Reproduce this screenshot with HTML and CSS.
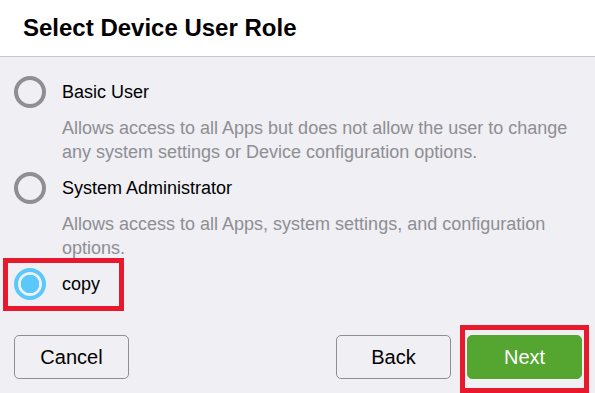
FILE: index.html
```html
<!DOCTYPE html>
<html lang="en">
  <head>
    <meta charset="UTF-8" />
    <meta name="viewport" content="width=device-width, initial-scale=1.0" />
    <title>Select Device User Role</title>
    <link rel="stylesheet" href="styles.css">
  </head>
  <body>
    <div class="header">
      <h1>Select Device User Role</h1>
    </div>
    <div class="roles">
      <div class="role">
        <div class="row">
          <span class="radio"></span>
          <span class="label">Basic User</span>
        </div>
        <p class="desc">Allows access to all Apps but does not allow the user to change any system settings or Device configuration options.</p>
      </div>
      <div class="role">
        <div class="row">
          <span class="radio"></span>
          <span class="label">System Administrator</span>
        </div>
        <p class="desc">Allows access to all Apps, system settings, and configuration options.</p>
      </div>
      <div class="role">
        <div class="row highlighted">
          <span class="radio checked"></span>
          <span class="label">copy</span>
        </div>
      </div>
    </div>
    <div class="actions">
      <button class="btn">Cancel</button>
      <div class="right">
        <button class="btn">Back</button>
        <button class="btn primary highlighted">Next</button>
      </div>
    </div>
  </body>
</html>
```

FILE: styles.css
```css
:root {
  --bg: #efeff4;
  --gray: #8e8e93;
  --blue: #5ac8fa;
  --green: #55a630;
  --mark: #e8192c;
}

*,
*::after {
  box-sizing: border-box;
  margin: 0;
  padding: 0;
  font-family: "Liberation Sans", Arial, sans-serif;
}

body {
  background: var(--bg);
  width: 595px;
  height: 393px;
  overflow: hidden;
}

.header {
  height: 57px;
  background: #fff;
  border-bottom: 1px solid #c8c7cc;
  padding-left: 23px;
  display: flex;
  align-items: center;
}

h1 {
  font-size: 24px;
  font-weight: 700;
  color: #000;
}

.roles {
  padding: 19px 14px 0;
  display: flex;
  flex-direction: column;
  gap: 8px;
}

.row {
  display: flex;
  align-items: center;
  gap: 16px;
  height: 32px;
  position: relative;
}

.radio {
  width: 32px;
  height: 32px;
  border-radius: 50%;
  border: 4px solid var(--gray);
  flex: none;
}

.radio.checked {
  border-color: var(--blue);
  background: radial-gradient(circle, var(--blue) 0 9px, transparent 9.5px);
}

.label {
  font-size: 18px;
  color: #000;
}

.desc {
  margin: 8px 0 0 48px;
  font-size: 18px;
  line-height: 24px;
  color: var(--gray);
}

.row.highlighted::after {
  content: "";
  position: absolute;
  left: -11px;
  top: -10px;
  width: 121px;
  height: 53px;
  border: 5px solid var(--mark);
}

.actions {
  display: flex;
  justify-content: space-between;
  padding: 35px 13px 0 14px;
}

.right {
  display: flex;
  gap: 16px;
}

.btn {
  position: relative;
  width: 115px;
  height: 44px;
  border: 1px solid var(--gray);
  border-radius: 5px;
  background: var(--bg);
  font-size: 20px;
  color: #000;
}

.btn.primary {
  background: var(--green);
  border-color: var(--green);
  color: #fff;
}

.btn.highlighted::after {
  content: "";
  position: absolute;
  left: -8px;
  top: -11px;
  width: 129px;
  height: 68px;
  border: 5px solid var(--mark);
}
```
